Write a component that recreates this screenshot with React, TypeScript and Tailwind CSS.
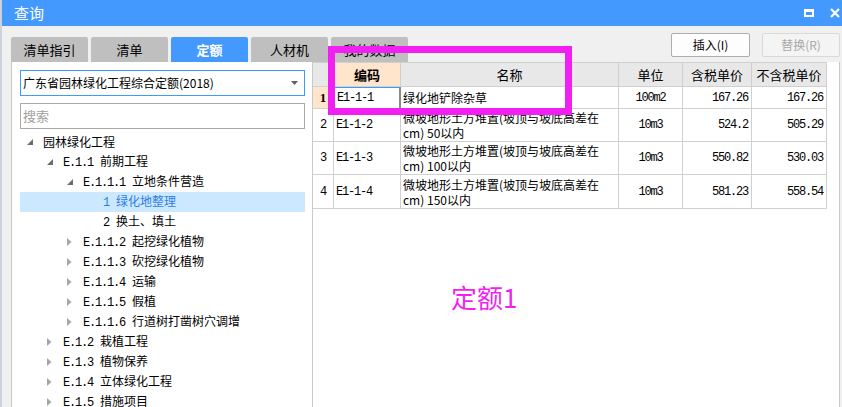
import React from "react";

const CJK = "font-['Noto_Sans_CJK_SC',sans-serif]";

type Node = {
    code?: string;
    name: string;
    level: number;
    state: "open" | "closed" | "leaf";
    selected?: boolean;
};

const tree: Node[] = [
    { name: "园林绿化工程", level: 0, state: "open" },
    { code: "E.1.1", name: "前期工程", level: 1, state: "open" },
    { code: "E.1.1.1", name: "立地条件营造", level: 2, state: "open" },
    { code: "1", name: "绿化地整理", level: 3, state: "leaf", selected: true },
    { code: "2", name: "换土、填土", level: 3, state: "leaf" },
    { code: "E.1.1.2", name: "起挖绿化植物", level: 2, state: "closed" },
    { code: "E.1.1.3", name: "砍挖绿化植物", level: 2, state: "closed" },
    { code: "E.1.1.4", name: "运输", level: 2, state: "closed" },
    { code: "E.1.1.5", name: "假植", level: 2, state: "closed" },
    { code: "E.1.1.6", name: "行道树打凿树穴调增", level: 2, state: "closed" },
    { code: "E.1.2", name: "栽植工程", level: 1, state: "closed" },
    { code: "E.1.3", name: "植物保养", level: 1, state: "closed" },
    { code: "E.1.4", name: "立体绿化工程", level: 1, state: "closed" },
    { code: "E.1.5", name: "措施项目", level: 1, state: "closed" },
];

const rows = [
    { no: "1", code: "E1-1-1", name: ["绿化地铲除杂草"], unit: "100m2", tax: "167.26", notax: "167.26" },
    { no: "2", code: "E1-1-2", name: ["微坡地形土方堆置(坡顶与坡底高差在", "cm) 50以内"], unit: "10m3", tax: "524.2", notax: "505.29" },
    { no: "3", code: "E1-1-3", name: ["微坡地形土方堆置(坡顶与坡底高差在", "cm) 100以内"], unit: "10m3", tax: "550.82", notax: "530.03" },
    { no: "4", code: "E1-1-4", name: ["微坡地形土方堆置(坡顶与坡底高差在", "cm) 150以内"], unit: "10m3", tax: "581.23", notax: "558.54" },
];

const tabs = ["清单指引", "清单", "定额", "人材机", "我的数据"];

function Mono({ children }: { children: React.ReactNode }) {
    return <span className="font-['Liberation_Mono',monospace] tracking-[-1.2px]">{children}</span>;
}

function TreeIcon({ state }: { state: Node["state"] }) {
    if (state === "open") {
        return (
            <svg width="6" height="6" viewBox="0 0 6 6">
                <polygon points="6,0 6,6 0,6" fill="#6b6b6b" />
            </svg>
        );
    }
    if (state === "closed") {
        return (
            <svg width="5" height="8" viewBox="0 0 5 8">
                <polygon points="0,0 4.5,4 0,8" fill="#a6a6a6" />
            </svg>
        );
    }
    return null;
}

function TreeRow({ node }: { node: Node }) {
    const pl = ["pl-[7px]", "pl-[27px]", "pl-[47px]", "pl-[67px]"][node.level];
    return (
        <div
            className={`flex h-[20px] items-center ${pl} text-[12px] ${node.selected ? "bg-[#cce8ff] text-[#2b7de9]" : "text-black"}`}
        >
            <div className="flex w-[16px] items-center">
                <TreeIcon state={node.state} />
            </div>
            <span className="whitespace-nowrap">
                {node.code && <Mono>{node.code}</Mono>}
                {node.code && <span className="inline-block w-[7px]" />}
                {node.name}
            </span>
        </div>
    );
}

export default function App() {
    return (
        <div className={`relative h-[407px] w-[842px] overflow-hidden border-l-2 border-[#cdd3da] bg-[#f0f0f0] ${CJK}`}>
            {/* title bar */}
            <div className="flex h-[26px] items-center justify-between bg-[#4499ff] pl-[12px] pr-[2px] text-white">
                <span className="text-[15px]">查询</span>
                <div className="flex items-center gap-[16px]">
                    <div className="h-[8px] w-[10px] border-2 border-t-[3px] border-white" />
                    <svg width="10" height="10" viewBox="0 0 10 10">
                        <path d="M1 1 L9 9 M9 1 L1 9" stroke="white" strokeWidth="2.2" />
                    </svg>
                </div>
            </div>

            <div className="pl-[9px] pr-[2px]">
                {/* tabs + buttons */}
                <div className="flex h-[36px] items-start justify-between">
                    <div className="flex gap-[3px] pt-[11px]">
                        {tabs.map((t) => (
                            <div
                                key={t}
                                className={`flex h-[25px] w-[77px] items-center justify-center rounded-t-[2px] text-[13px] ${t === "定额" ? "bg-[#4499ff] font-bold text-white" : "bg-[#bfbfbf] text-black"}`}
                            >
                                {t}
                            </div>
                        ))}
                    </div>
                    <div className="flex gap-[12px] pt-[7px]">
                        <button className="h-[24px] w-[79px] rounded-[2px] border border-[#adadad] bg-[#fdfdfd] text-[12px] text-black">
                            插入(I)
                        </button>
                        <button className="h-[24px] w-[78px] rounded-[2px] border border-[#d9d9d9] bg-[#f4f4f4] text-[12px] text-[#a8a8a8]">
                            替换(R)
                        </button>
                    </div>
                </div>

                {/* content */}
                <div className="flex h-[345px]">
                    {/* left panel */}
                    <div className="w-[302px] border-l border-r border-[#c9c9c9] bg-white pl-[8px]">
                        <div className="mt-[8px] flex h-[26px] w-[285px] items-center justify-between border border-[#3d9aff] pl-[2px] pr-[6px] text-[12px] text-black">
                            <span>广东省园林绿化工程综合定额(2018)</span>
                            <svg width="7" height="4" viewBox="0 0 7 4">
                                <polygon points="0,0 7,0 3.5,4" fill="#606060" />
                            </svg>
                        </div>
                        <div className="mt-[7px] flex h-[26px] w-[285px] items-center border border-[#a9a9a9] pl-[2px] text-[13px] text-[#a0a0a0]">
                            搜索
                        </div>
                        <div className="mt-[3px] w-[285px]">
                            {tree.map((n, i) => (
                                <TreeRow key={i} node={n} />
                            ))}
                        </div>
                    </div>

                    {/* right panel */}
                    <div className="flex-1 border-r border-[#c9c9c9] bg-white">
                        <div className="w-[514px] text-[12px] text-black">
                            <div className="grid h-[25px] grid-cols-[21px_67px_218px_64px_69px_75px] border-t border-b border-[#d0d0d0] bg-[#e8e8e8]">
                                <div className="border-r border-[#d0d0d0]" />
                                <div className="flex items-center justify-center border-r border-[#d0d0d0] bg-[#ffe5cb] text-[13px] font-bold">编码</div>
                                <div className="flex items-center justify-center border-r border-[#d0d0d0] text-[13px]">名称</div>
                                <div className="flex items-center justify-center border-r border-[#d0d0d0] text-[13px]">单位</div>
                                <div className="flex items-center justify-center border-r border-[#d0d0d0] text-[13px]">含税单价</div>
                                <div className="flex items-center justify-center border-r border-[#d0d0d0] text-[13px]">不含税单价</div>
                            </div>
                            {rows.map((r, i) => (
                                <div
                                    key={r.no}
                                    className={`grid grid-cols-[21px_67px_218px_64px_69px_75px] border-b border-[#d0d0d0] ${i === 0 ? "h-[22px]" : i === 3 ? "h-[34px]" : "h-[33px]"}`}
                                >
                                    <div
                                        className={`flex items-center justify-center border-r border-[#d0d0d0] ${i === 0 ? "bg-[#ffe5cb] font-['Liberation_Serif',serif] text-[13px] font-bold" : ""}`}
                                    >
                                        {i === 0 ? r.no : <Mono>{r.no}</Mono>}
                                    </div>
                                    <div
                                        className={`flex items-center pl-[2px] ${i === 0 ? "border-t border-l border-r-2 border-t-[#3d9aff] border-l-[#3d9aff] border-r-[#8a8a8a]" : "border-r border-[#d0d0d0]"}`}
                                    >
                                        <Mono>{r.code}</Mono>
                                    </div>
                                    <div className="flex flex-col justify-center border-r border-[#d0d0d0] pl-[2px] leading-[15px]">
                                        {r.name.map((l) => (
                                            <span key={l} className="whitespace-nowrap">{l}</span>
                                        ))}
                                    </div>
                                    <div className="flex items-center justify-center border-r border-[#d0d0d0]">
                                        <Mono>{r.unit}</Mono>
                                    </div>
                                    <div className="flex items-center justify-end border-r border-[#d0d0d0] pr-[3px]">
                                        <Mono>{r.tax}</Mono>
                                    </div>
                                    <div className="flex items-center justify-end border-r border-[#d0d0d0] pr-[3px]">
                                        <Mono>{r.notax}</Mono>
                                    </div>
                                </div>
                            ))}
                        </div>
                    </div>
                </div>
            </div>

            {/* annotations */}
            <div className="absolute left-[326px] top-[46px] h-[69px] w-[244px] border-[7px] border-[#f21ff2]" />
            <div className="absolute left-[449px] top-[284px] text-[26px] leading-none text-[#f21ff2]">定额1</div>
        </div>
    );
}
